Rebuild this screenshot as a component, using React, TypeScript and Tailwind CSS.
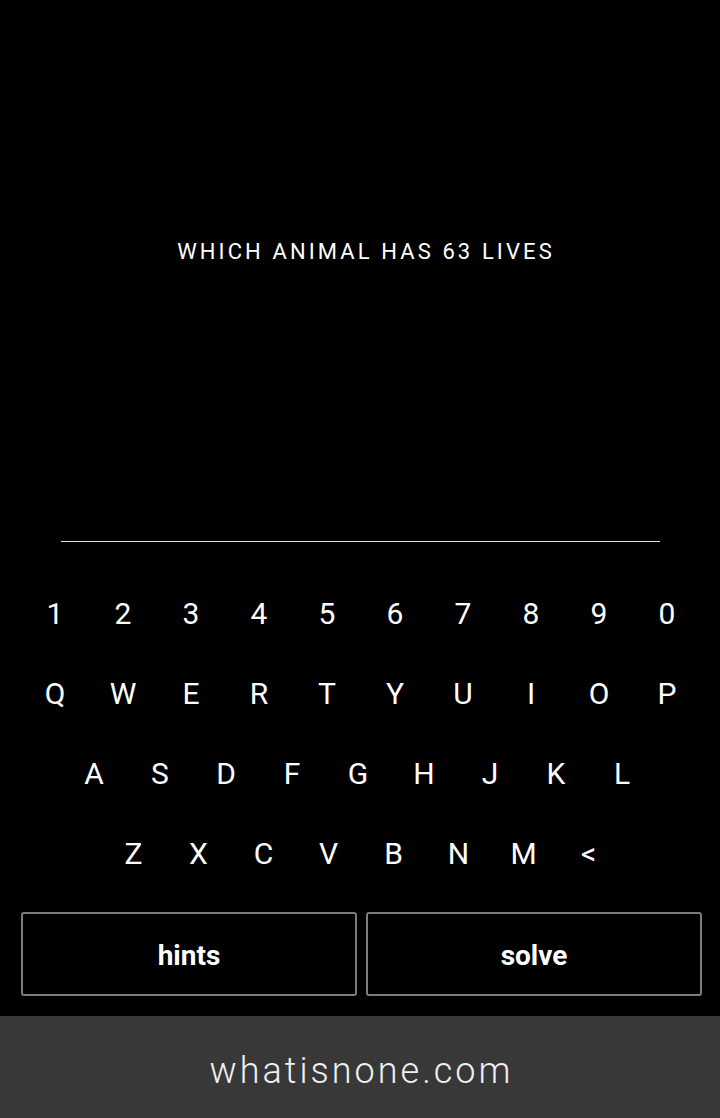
import React from "react";

const row1 = ["1", "2", "3", "4", "5", "6", "7", "8", "9", "0"];
const row2 = ["Q", "W", "E", "R", "T", "Y", "U", "I", "O", "P"];
const row3 = ["A", "S", "D", "F", "G", "H", "J", "K", "L"];
const row4 = ["Z", "X", "C", "V", "B", "N", "M", "<"];

export default function App() {
  return (
    <div
      className="w-[720px] h-[1118px] bg-black text-white flex flex-col overflow-hidden"
      style={{ fontFamily: "Roboto, 'Noto Sans', sans-serif" }}
    >
      <div className="h-[541px] pt-[240px] flex justify-center">
        <div className="text-[22px] leading-[24px] tracking-[3.1px] h-[24px] pl-[12px]">WHICH ANIMAL HAS 63 LIVES</div>
      </div>
      <div className="ml-[61px] w-[599px] h-px bg-[#e0e0e0]"></div>
      <div className="pt-[31px] flex flex-col">
        <div className="flex pl-[21px]">
          {row1.map((k) => (
            <div key={k} className="w-[68px] h-[80px] flex items-center justify-center text-[30px]">
              {k}
            </div>
          ))}
        </div>
        <div className="flex pl-[21px]">
          {row2.map((k) => (
            <div key={k} className="w-[68px] h-[80px] flex items-center justify-center text-[30px]">
              {k}
            </div>
          ))}
        </div>
        <div className="flex pl-[61px]">
          {row3.map((k) => (
            <div key={k} className="w-[66px] h-[80px] flex items-center justify-center text-[30px]">
              {k}
            </div>
          ))}
        </div>
        <div className="flex pl-[101px]">
          {row4.map((k) => (
            <div key={k} className="w-[65px] h-[80px] flex items-center justify-center text-[30px]">
              {k}
            </div>
          ))}
        </div>
      </div>
      <div className="mt-[19px] pl-[21px] flex gap-[9px]">
        <button className="w-[336px] h-[84px] pt-[4px] border-2 border-[#7c7c7c] rounded-[3px] bg-black text-white text-[28px] font-bold">
          hints
        </button>
        <button className="w-[336px] h-[84px] pt-[4px] border-2 border-[#7c7c7c] rounded-[3px] bg-black text-white text-[28px] font-bold">
          solve
        </button>
      </div>
      <div className="mt-[20px] h-[102px] pt-[8px] bg-[#383838] flex items-center justify-center">
        <div className="text-[36px] font-light tracking-[3px] pl-[3px] text-[#f0f0f0]">whatisnone.com</div>
      </div>
    </div>
  );
}
